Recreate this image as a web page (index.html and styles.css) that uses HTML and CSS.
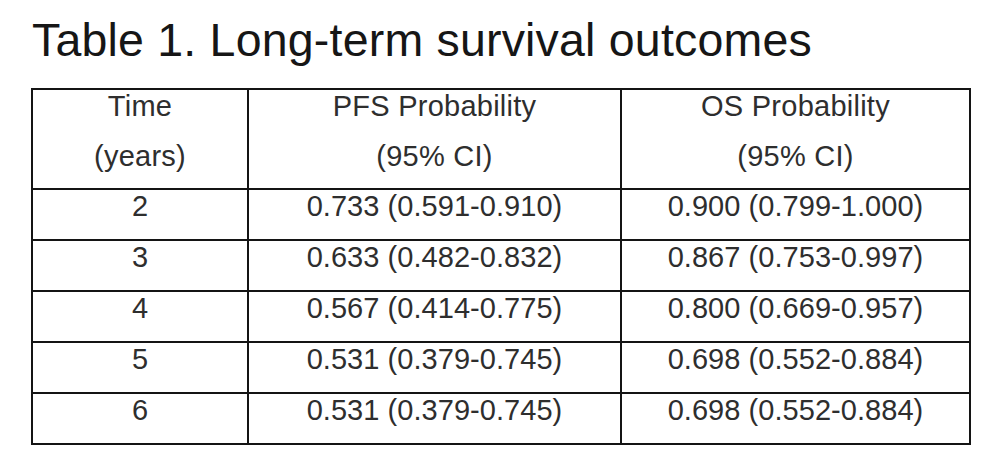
FILE: index.html
```html
<!DOCTYPE html>
<html lang="en">
<head>
<meta charset="utf-8">
<title>Table 1. Long-term survival outcomes</title>
<link rel="stylesheet" href="styles.css">
</head>
<body>
<div class="page">
  <h1 class="title">Table 1. Long-term survival outcomes</h1>
  <table class="outcomes">
    <colgroup>
      <col class="c-time">
      <col class="c-pfs">
      <col class="c-os">
    </colgroup>
    <thead>
      <tr class="head-row">
        <th><span class="hl">Time</span><span class="hl">(years)</span></th>
        <th><span class="hl">PFS Probability</span><span class="hl">(95% CI)</span></th>
        <th><span class="hl">OS Probability</span><span class="hl">(95% CI)</span></th>
      </tr>
    </thead>
    <tbody>
      <tr><td>2</td><td>0.733 (0.591-0.910)</td><td>0.900 (0.799-1.000)</td></tr>
      <tr><td>3</td><td>0.633 (0.482-0.832)</td><td>0.867 (0.753-0.997)</td></tr>
      <tr><td>4</td><td>0.567 (0.414-0.775)</td><td>0.800 (0.669-0.957)</td></tr>
      <tr><td>5</td><td>0.531 (0.379-0.745)</td><td>0.698 (0.552-0.884)</td></tr>
      <tr><td>6</td><td>0.531 (0.379-0.745)</td><td>0.698 (0.552-0.884)</td></tr>
    </tbody>
  </table>
</div>
</body>
</html>
```
FILE: styles.css
```css
html, body {
  margin: 0;
  padding: 0;
  background: #ffffff;
}

.page {
  padding: 17px 0 0 31px;
  font-family: "Liberation Sans", Arial, sans-serif;
}

.title {
  margin: 0 0 24px 1px;
  font-size: 46.5px;
  line-height: 46.5px;
  letter-spacing: 0.2px;
  font-weight: normal;
  color: #161616;
  white-space: nowrap;
}

.outcomes {
  border-collapse: collapse;
  table-layout: fixed;
  width: 940px;
  color: #2e2e2e;
  font-size: 29px;
  line-height: 32px;
}

.c-time { width: 216px; }
.c-pfs { width: 373px; }
.c-os { width: 349px; }

.outcomes th,
.outcomes td {
  border: 2px solid #141414;
  padding: 0;
  text-align: center;
  vertical-align: top;
  font-weight: normal;
  white-space: nowrap;
}

.outcomes th {
  height: 98px;
  letter-spacing: 0.25px;
}

.outcomes td {
  height: 49px;
  letter-spacing: 0.05px;
}

.hl {
  display: block;
}

.hl + .hl {
  margin-top: 18px;
}
```
